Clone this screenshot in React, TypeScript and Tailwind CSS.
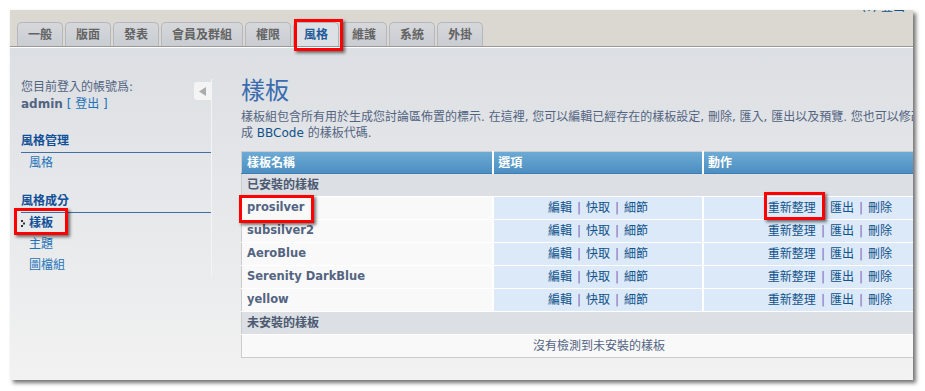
import React from "react";

const font = { fontFamily: '"DejaVu Sans", "Noto Sans CJK TC", sans-serif' };

const tabs = ["一般", "版面", "發表", "會員及群組", "權限", "風格", "維護", "系統", "外掛"];
const styles = ["prosilver", "subsilver2", "AeroBlue", "Serenity DarkBlue", "yellow"];

function Sep() {
  return <span className="text-[#7f68b3] px-[5px]">|</span>;
}

function RedBox({ cls }: { cls: string }) {
  return (
    <div
      className={
        "absolute border-[3px] border-[#ff0000] shadow-[2px_2px_3px_rgba(0,0,0,0.55)] pointer-events-none " + cls
      }
    />
  );
}

export default function App() {
  return (
    <div className="w-[925px] h-[391px] bg-white overflow-hidden" style={font}>
      <div className="ml-[10px] mt-[10px] w-[903px] h-[370px] relative overflow-hidden shadow-[3px_3px_4px_rgba(0,0,0,0.55)] flex flex-col">
        {/* header */}
        <div className="h-[36px] bg-[#dbd8d2] relative flex items-end pl-[7px] gap-[2px] shrink-0">
          <span className="absolute right-[8px] top-[-9px] text-[12px] leading-[12px] text-[#105289]">(?) 登出</span>
          {tabs.map((t) => {
            const active = t === "風格";
            return (
              <div
                key={t}
                className={
                  "h-[24px] px-[10px] flex items-center rounded-t-[5px] border border-b-0 text-[12px] font-bold " +
                  (active
                    ? "bg-[#dde0e5] border-[#b2b6bb] text-[#1d5a9a]"
                    : "bg-linear-to-b from-[#d6d8dc] to-[#c9ccd1] border-[#b4b7bc] text-[#636363]")
                }
              >
                {t}
              </div>
            );
          })}
        </div>
        <div className="h-px bg-[#9a9a9a] shrink-0" />
        <div className="h-px bg-white shrink-0" />
        {/* body */}
        <div className="flex-1 flex bg-linear-to-b from-[#dcdfe3] to-[#f2f2f2]">
          {/* sidebar */}
          <div className="w-[202px] shrink-0 pl-[11px] pt-[31px]">
            <div className="border-r border-[#f3f4f5] h-[197px]">
              <div className="flex justify-between items-start">
                <div className="text-[12px] leading-[17px] text-[#536482]">
                  您目前登入的帳號爲:
                  <br />
                  <b>admin</b> <span className="text-[#1e73b9]">[ 登出 ]</span>
                </div>
                <div className="mt-[3px] w-[17px] h-[18px] bg-[#f4f4f4] rounded-l-[3px] flex items-center justify-center">
                  <svg width="8" height="9" viewBox="0 0 8 9">
                    <polygon points="7,0 7,9 0,4.5" fill="#a9abae" />
                  </svg>
                </div>
              </div>
              <div className="mt-[20px]">
                <div className="text-[12px] leading-[17px] font-bold text-[#115098] pb-[2px] border-b border-[#3e6fa5]">
                  風格管理
                </div>
                <div className="text-[12px] leading-[21px] text-[#1e73b9] pl-[8px]">風格</div>
              </div>
              <div className="mt-[19px]">
                <div className="text-[12px] leading-[17px] font-bold text-[#115098] pb-[2px] border-b border-[#3e6fa5]">
                  風格成分
                </div>
                <div className="text-[12px] leading-[21px] font-bold text-[#115098] flex items-center">
                  <svg width="8" height="7" viewBox="0 0 8 7">
                    <rect x="0" y="0" width="2" height="2" fill="#333" />
                    <rect x="2" y="2.5" width="2" height="2" fill="#333" />
                    <rect x="0" y="5" width="2" height="2" fill="#333" />
                  </svg>
                  樣板
                </div>
                <div className="text-[12px] leading-[21px] text-[#1e73b9] pl-[8px]">主題</div>
                <div className="text-[12px] leading-[21px] text-[#1e73b9] pl-[8px]">圖檔組</div>
              </div>
            </div>
          </div>
          {/* main */}
          <div className="pl-[29px] pt-[29px] w-[760px] shrink-0">
            <div className="text-[24px] leading-[28px] text-[#3a6cae]">樣板</div>
            <div className="mt-[4px] text-[12px] leading-[16px] text-[#536482] whitespace-nowrap">
              樣板組包含所有用於生成您討論區佈置的標示. 在這裡, 您可以編輯已經存在的樣板設定, 刪除, 匯入, 匯出以及預覽. 您也可以修改
              <br />
              成 <span className="text-[#105289]">BBCode</span> 的樣板代碼.
            </div>
            <table className="mt-[10px] w-[716px] border-collapse border border-[#cccccc] text-[12px]">
              <thead>
                <tr className="h-[22px] bg-linear-to-b from-[#6cabd5] to-[#4b8dc0] text-white">
                  <th className="w-[252px] text-left font-bold pl-[5px] border-b border-[#3d7db1]">樣板名稱</th>
                  <th className="w-[210px] text-left font-bold pl-[4px] border-l-2 border-white border-b border-b-[#3d7db1]">選項</th>
                  <th className="w-[254px] text-left font-bold pl-[4px] border-l-2 border-white border-b border-b-[#3d7db1]">動作</th>
                </tr>
              </thead>
              <tbody>
                <tr className="h-[23px] bg-[#dcdfe3] border-t border-white">
                  <td colSpan={3} className="pl-[5px] font-bold text-[#4c5a72]">已安裝的樣板</td>
                </tr>
                {styles.map((s) => (
                  <tr key={s} className="h-[23px] border-t border-white">
                    <td className="bg-[#f9f9f9] pl-[5px] font-bold text-[11.5px] text-[#536482]">{s}</td>
                    <td className="bg-[#dce9f9] border-l-2 border-white text-center text-[#105289]">
                      編輯<Sep />快取<Sep />細節
                    </td>
                    <td className="bg-[#dce9f9] border-l-2 border-white text-center text-[#105289]">
                      重新整理<Sep />匯出<Sep />刪除
                    </td>
                  </tr>
                ))}
                <tr className="h-[23px] bg-[#dcdfe3] border-t border-white">
                  <td colSpan={3} className="pl-[5px] font-bold text-[#4c5a72]">未安裝的樣板</td>
                </tr>
                <tr className="h-[23px] bg-[#f9f9f9] border-t border-white">
                  <td colSpan={3} className="text-center text-[#536482]">沒有檢測到未安裝的樣板</td>
                </tr>
              </tbody>
            </table>
          </div>
        </div>
        {/* highlight boxes */}
        <RedBox cls="left-[284px] top-[9px] w-[49px] h-[32px]" />
        <RedBox cls="left-[4px] top-[198px] w-[54px] h-[27px]" />
        <RedBox cls="left-[229px] top-[185px] w-[75px] h-[28px]" />
        <RedBox cls="left-[754px] top-[182px] w-[61px] h-[28px]" />
      </div>
    </div>
  );
}
